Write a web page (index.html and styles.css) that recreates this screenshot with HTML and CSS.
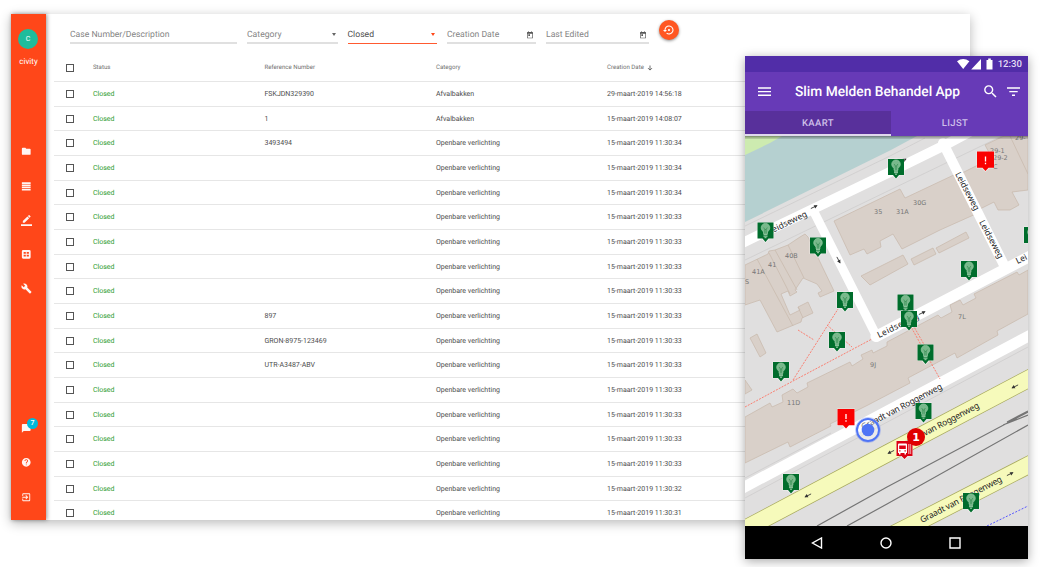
FILE: index.html
```
<!DOCTYPE html>
<html lang="en">
<head>
<meta charset="utf-8">
<title>Slim Melden</title>
<link rel="stylesheet" href="styles.css">
</head>
<body>
<main class="stage">
  <section class="desk">
    <aside class="sidebar">
      <div class="avatar">C</div>
      <div class="org">civity</div>
      <nav class="nav">
        <a class="nav-item"><svg viewBox="0 0 24 24"><path d="M10 4H4a2 2 0 0 0-2 2v12a2 2 0 0 0 2 2h16a2 2 0 0 0 2-2V8a2 2 0 0 0-2-2h-8z"/></svg></a>
        <a class="nav-item"><svg viewBox="0 0 24 24"><path d="M2 3h20v3.800H2zM2 8h20v3.800H2zM2 13h20v3.800H2zM2 18h20v3.500H2z"/></svg></a>
        <a class="nav-item"><svg class="wide" viewBox="0 0 24 24"><path d="M17.750 7 14 3.250l-10 10V17h3.750zM20.710 4.040a1 1 0 0 0 0-1.410L18.370.290a1 1 0 0 0-1.410 0L15 2.250 18.750 6zM0 20h24v4H0z"/></svg></a>
        <a class="nav-item"><svg viewBox="0 0 24 24"><path fill-rule="evenodd" d="M5 2h14a3 3 0 0 1 3 3v14a3 3 0 0 1-3 3H5a3 3 0 0 1-3-3V5a3 3 0 0 1 3-3zM6 7v4h5V7zM13 7v4h5V7zM6 13v4h5v-4zM13 13v4h5v-4z"/></svg></a>
        <a class="nav-item"><svg class="wide" viewBox="0 0 24 24"><path d="M22.700 19l-9.100-9.100c.9-2.300.4-5-1.500-6.900-2-2-5-2.400-7.400-1.300L9 6 6 9 1.600 4.700C.4 7.100.9 10.100 2.900 12.100c1.900 1.900 4.600 2.400 6.900 1.500l9.100 9.100c.4.4 1 .4 1.400 0l2.300-2.300c.5-.4.5-1.100.1-1.400z"/></svg></a>
      </nav>
      <nav class="nav nav-bottom">
        <a class="nav-item chat"><svg viewBox="0 0 24 24"><path d="M20 2H4a2 2 0 0 0-2 2v18l4-4h14a2 2 0 0 0 2-2V4a2 2 0 0 0-2-2z"/></svg><span class="badge">7</span></a>
        <a class="nav-item"><svg viewBox="0 0 24 24"><path d="M12 2C6.480 2 2 6.480 2 12s4.480 10 10 10 10-4.480 10-10S17.520 2 12 2zm1 17h-2v-2h2v2zm2.070-7.750-.9.920C13.450 12.900 13 13.500 13 15h-2v-.5c0-1.100.450-2.100 1.170-2.830l1.240-1.260c.370-.360.590-.860.590-1.410 0-1.100-.9-2-2-2s-2 .9-2 2H8c0-2.210 1.790-4 4-4s4 1.790 4 4c0 .880-.360 1.680-.930 2.250z"/></svg></a>
        <a class="nav-item"><svg viewBox="0 0 24 24"><path d="M10.090 15.590 11.500 17l5-5-5-5-1.410 1.410L12.670 11H3v2h9.670zM19 3H5a2 2 0 0 0-2 2v4h2V5h14v14H5v-4H3v4a2 2 0 0 0 2 2h14a2 2 0 0 0 2-2V5a2 2 0 0 0-2-2z"/></svg></a>
      </nav>
    </aside>
    <div class="content">
      <div class="filters">
        <div class="field f-case"><span>Case Number/Description</span></div>
        <div class="field f-cat"><span>Category</span><i class="caret"></i></div>
        <div class="field f-closed active"><span>Closed</span><i class="caret"></i></div>
        <div class="field f-created"><span>Creation Date</span><svg class="cal" viewBox="0 0 24 24"><path d="M19 3h-1V1h-2v2H8V1H6v2H5a2 2 0 0 0-2 2v15a2 2 0 0 0 2 2h14a2 2 0 0 0 2-2V5a2 2 0 0 0-2-2zm0 17H5V8h14zM7 10h5v5H7z"/></svg></div>
        <div class="field f-edited"><span>Last Edited</span><svg class="cal" viewBox="0 0 24 24"><path d="M19 3h-1V1h-2v2H8V1H6v2H5a2 2 0 0 0-2 2v15a2 2 0 0 0 2 2h14a2 2 0 0 0 2-2V5a2 2 0 0 0-2-2zm0 17H5V8h14zM7 10h5v5H7z"/></svg></div>
        <button class="reset"><svg viewBox="0 0 24 24"><path d="M14 12c0-1.100-.9-2-2-2s-2 .9-2 2 .9 2 2 2 2-.9 2-2zm-2-9a9 9 0 0 0-9 9H0l4 4 4-4H5c0-3.870 3.130-7 7-7s7 3.130 7 7a6.995 6.995 0 0 1-11.060 5.700l-1.420 1.440A9 9 0 1 0 12 3z"/></svg></button>
      </div>
      <div class="table" id="table">
        <div class="row head"><i class="box"></i><span>Status</span><span>Reference Number</span><span>Category</span><span class="sorted">Creation Date <svg viewBox="0 0 12 12"><path d="M6 1v9M2 6.200l4 4 4-4"/></svg></span></div>
      </div>
    </div>
  </section>

  <section class="phone">
    <div class="statusbar">
      <svg class="signals" viewBox="0 0 38 12"><path d="M0 3.200Q6.200-1.400 12.400 3.200L6.200 11zM24 1v10.500H14.200zM29.500 2h1.700V.5h2.600V2h1.700v9.500h-6z"/></svg>
      <span>12:30</span>
    </div>
    <div class="appbar">
      <svg class="menu" viewBox="0 0 13 9"><path d="M0 1h13M0 4.600h13M0 8.200h13"/></svg>
      <h1>Slim Melden Behandel App</h1>
      <svg class="search" viewBox="0 0 24 24"><path d="M15.500 14h-.790l-.280-.270A6.470 6.470 0 0 0 16 9.500 6.500 6.500 0 1 0 9.500 16c1.610 0 3.090-.590 4.230-1.570l.270.280v.790l5 4.990L20.490 19zm-6 0C7.010 14 5 11.990 5 9.500S7.010 5 9.500 5 14 7.010 14 9.500 11.990 14 9.500 14z"/></svg>
      <svg class="funnel" viewBox="0 0 13 9"><path d="M0 1h13M2.300 4.600h8.400M5 8.200h3"/></svg>
    </div>
    <div class="tabs"><div class="tab on">KAART</div><div class="tab">LIJST</div></div>
    <svg class="map" viewBox="745 136 283 390">
      <defs>
        <g id="pin">
          <path class="halo" d="M-8.500-.5h17v17H4L0 20.500-4 16.500h-4.500z"/>
          <path fill="#006d2c" d="M-8 0H8v16H3L0 19.500-3 16h-5z"/>
          <path fill="#78b98b" stroke="#a5d3b0" stroke-width=".6" d="M-2 11.300V9.500C-3.200 8-4.300 7.200-4.300 5.200a4.300 4.300 0 0 1 8.600 0C4.300 7.200 3.200 8 2 9.500v1.800z"/>
          <path fill="none" stroke="#a5d3b0" stroke-width="1" d="M-2 12.200h4M-2 13.700h4M-1 15.200h2"/>
          <path fill="none" stroke="#2d874b" stroke-width=".6" d="M-1.800 5 -.7 7V11M1.800 5 .7 7V11M-.7 7h1.400"/>
        </g>
        <g id="alert">
          <path class="halo" d="M-9-.5H9v17.500H4L0 20.500-4 17h-5z"/>
          <path fill="#fa0000" d="M-8.500 0h17v16.300H3L0 19.500l-3-3.200h-5.500z"/>
          <path stroke="#fff" stroke-width="1.300" d="M0 5v5M0 11.300v1.400"/>
        </g>
        <g id="arrow"><path fill="none" stroke="#333" stroke-width=".8" d="M-3.500 0H3"/><path fill="#333" d="M.5-1.800 4 0 .5 1.800z"/></g>
      </defs>
      <path fill="#e0dfdf" d="M745 136h283v390H745z"/>
      <path fill="#b5d0d0" d="M745 136h172l-27 14.500L745 222z"/>
      <path fill="#cdebb0" d="M745 136h37l-12 7-25 12z"/>
      <g class="thin">
        <path d="M745 260 770 248 890 190 1002 136M745 226 890 156 925 138M745 498 1028 347M745 478 831 433"/>
      </g>
      <g class="building">
        <path d="M834 221 900 189 905 198 958 173 978 213 940 230 902 249 893 234 880 241 881 247 867 254 864 249 850 255z"/>
        <path d="M960 174 992 158 985 145 1004 136H1028V190L1012 192 1019 205 1010 210 998 210 994 202 980 209z"/>
        <path d="M1010 136 1028 174" />
        <path d="M911 259 933 248 936 254 914 265zM936 248 966 232 969 238 939 253zM861 276 903 255 908 264 870 285z"/>
        <path d="M745 265 768 254 769 251 775 250 788 245 800 237 805 234 808 237 834 291 820 297 818 293 822 291 817 284 803 278 795 290 797 292 790 296 788 291 781 294 790 315 800 310 798 307 808 302 813 313 802 318 801 322 777 332 760 300 745 305z"/>
        <path d="M757 259 793 326M769 253 790 294M775 250 797 290M788 245 804 278M798 307 803 318"/>
        <path d="M750 338 757 334 766 353 760 357zM745 380 752 390 745 394z"/>
        <path d="M745 417 770 403 772 407 783 402 782 395 793 389 797 393 808 387 807 383 850 362 852 366 863 359 861 355 872 350 873 353 887 346 887 342 938 315 941 318 952 312 950 305 960 300 963 305 976 298 974 294 1017 272 1019 275 1028 270V314L997 331 998 335 957 358 955 353 908 378 910 383 868 405 830 424 831 426 790 447 788 442 745 463z"/>
      </g>
      <g class="road">
        <path stroke-width="10" d="M735 246.500 890 172 945 145 975 129M943 143 1004 265"/>
        <path stroke-width="9" d="M813 210 877 337"/>
        <path stroke-width="11" d="M876 336.500 1040 251"/>
        <path stroke-width="11" d="M735 492 1040 330"/>
      </g>
      <g class="foot">
        <path d="M745 407 793 381 872 339M793 380 838 309M798 330 814 340M827 325 852 347M910 325 940 379M913 325 926 348"/>
      </g>
      <g fill="none">
        <path stroke="#a9ab60" stroke-width="18" d="M725 539.500 890 452 1048 368.500M880 541 910 526 1048 455"/>
        <path stroke="#f6fabb" stroke-width="16.500" d="M725 539.500 890 452 1048 368.500M880 541 910 526 1048 455"/>
        <path stroke="#757575" stroke-width="1.200" d="M817 526 887 487 1028 412M847 526 887 504 1028 425M1003 425 1028 415M1007 422 1028 411"/>
        <path stroke="#5555ff" stroke-width="1" stroke-dasharray="2 1.500" d="M987 526 1028 506"/>
      </g>
      <g class="street">
        <text transform="translate(769.500 234.500) rotate(-26)" textLength="42.500">Leidseweg</text>
        <text transform="translate(955 174) rotate(62)" textLength="42">Leidseweg</text>
        <text transform="translate(979 222) rotate(62)" textLength="42">Leidseweg</text>
        <text transform="translate(1017.500 264) rotate(-26)">Lei</text>
        <text transform="translate(879 338) rotate(-26)" textLength="45">Leidseweg</text>
        <text transform="translate(863 430) rotate(-27.500)" textLength="90">Graadt van Roggenweg</text>
        <text transform="translate(900 449) rotate(-27.500)" textLength="90">Graadt van Roggenweg</text>
        <text transform="translate(922 523) rotate(-27.500)" textLength="91">Graadt van Roggenweg</text>
      </g>
      <g class="house">
        <text x="874" y="214">35</text><text x="896" y="214">31A</text><text x="913" y="205">30G</text>
        <text x="785" y="258">40B</text><text x="768" y="267">41</text><text x="752" y="274">41A</text><text x="745" y="284">S</text>
        <text x="958" y="319">7L</text><text x="870" y="367">9J</text><text x="787" y="405">11D</text>
        <text x="990" y="153">29-1</text><text x="993" y="160">29-2</text><text x="993" y="169">C</text><text x="1015" y="140">29-</text>
      </g>
      <use href="#arrow" transform="translate(814 207) rotate(-26)"/>
      <use href="#arrow" transform="translate(903 160.500) rotate(-26)"/>
      <use href="#arrow" transform="translate(838.500 260) rotate(62)"/>
      <use href="#arrow" transform="translate(922 313) rotate(-26)"/>
      <use href="#arrow" transform="translate(1015 386.500) rotate(153)"/>
      <use href="#arrow" transform="translate(808 495.500) rotate(153)"/>
      <use href="#arrow" transform="translate(891 452) rotate(153)"/>
      <use href="#arrow" transform="translate(1010 474) rotate(-27)"/>
      <use href="#pin" x="896" y="159"/><use href="#pin" x="765.500" y="222.500"/><use href="#pin" x="818" y="237.500"/>
      <use href="#pin" x="1032" y="227"/><use href="#pin" x="969" y="261"/><use href="#pin" x="845" y="292"/>
      <use href="#pin" x="905.500" y="294.500"/><use href="#pin" x="909" y="311"/><use href="#pin" x="837" y="332"/>
      <use href="#pin" x="925.500" y="344.500"/><use href="#pin" x="781" y="362"/><use href="#pin" x="923.500" y="403"/>
      <use href="#pin" x="791" y="474"/><use href="#pin" x="971" y="493"/>
      <use href="#alert" x="985.500" y="151.500"/><use href="#alert" x="846" y="409"/>
      <circle cx="868" cy="430" r="11" fill="#fff" fill-opacity=".35" stroke="#4f74f5" stroke-width="2"/>
      <circle cx="868" cy="430" r="12.500" fill="none" stroke="#4f74f5" stroke-opacity=".35"/>
      <circle cx="868" cy="430" r="6.300" fill="#4f74f5"/>
      <g transform="translate(904.500 441)">
        <path class="halo" d="M-8.500-.5h17v16H4L0 19l-4-3.500h-4.500z"/>
        <path fill="#dc0012" d="M-8 0H8v15H3L0 18l-3-3h-5z"/>
        <path fill="#fff" fill-rule="evenodd" d="M-6.500 3.500q0-1 1-1h7q1 0 1 1V12H1.500v1.500H0V12h-4v1.500h-1.500V12h-1zM-5.300 4.500v3.500h6.600V4.500zM-5.300 9.300v1.300h1.300V9.300zM0 9.300v1.300h1.300V9.300zM4 3h.8v10H4zM6 3h.6v10H6z"/>
      </g>
      <circle cx="916" cy="437" r="9" fill="#e00000"/>
      <text class="count" x="916" y="441">1</text>
      <path class="tabshade" d="M745 136h283v1.500H745z"/>
      <path class="tabshade soft" d="M745 137.500h283v1.500H745z"/>
    </svg>
    <div class="softkeys">
      <svg viewBox="0 0 12 12"><path d="M10.500 1v10L1.500 6z"/></svg>
      <svg viewBox="0 0 12 12"><circle cx="6" cy="6" r="5"/></svg>
      <svg viewBox="0 0 12 12"><path d="M1 1h10v10H1z"/></svg>
    </div>
  </section>
</main>
<script src="table.js"></script>
</body>
</html>
```
FILE: table.js
```
const A = 'Afvalbakken', O = 'Openbare verlichting';
const rows = [
  ['FSKJDN329390', A, '29-maart-2019 14:56:18'],
  ['1', A, '15-maart-2019 14:08:07'],
  ['3493494', O, '15-maart-2019 11:30:34'],
  ['', O, '15-maart-2019 11:30:34'],
  ['', O, '15-maart-2019 11:30:34'],
  ['', O, '15-maart-2019 11:30:33'],
  ['', O, '15-maart-2019 11:30:33'],
  ['', O, '15-maart-2019 11:30:33'],
  ['', O, '15-maart-2019 11:30:33'],
  ['897', O, '15-maart-2019 11:30:33'],
  ['GRON-8975-123469', O, '15-maart-2019 11:30:33'],
  ['UTR-A3487-ABV', O, '15-maart-2019 11:30:33'],
  ['', O, '15-maart-2019 11:30:33'],
  ['', O, '15-maart-2019 11:30:33'],
  ['', O, '15-maart-2019 11:30:33'],
  ['', O, '15-maart-2019 11:30:33'],
  ['', O, '15-maart-2019 11:30:32'],
  ['', O, '15-maart-2019 11:30:31']
];
document.getElementById('table').insertAdjacentHTML('beforeend', rows.map(r =>
  `<div class="row"><i class="box"></i><span class="closed">Closed</span><span>${r[0]}</span><span>${r[1]}</span><span>${r[2]}</span></div>`
).join(''));
```
FILE: styles.css
```
* { box-sizing: border-box; }
body {
  margin: 0;
  width: 1043px;
  height: 567px;
  overflow: hidden;
  background: #fff;
  font-family: Roboto, "Liberation Sans", sans-serif;
  text-rendering: geometricPrecision;
}
svg { display: block; flex: none; }
.stage { position: relative; height: 567px; padding: 14px 0 0 11px; }

.desk {
  display: flex;
  width: 959px;
  height: 506px;
  background: #fff;
  box-shadow: 0 3px 11px rgba(0, 0, 0, .28);
}
.sidebar {
  display: flex;
  flex-direction: column;
  align-items: center;
  width: 35px;
  padding: 14.500px 0 6px;
  background: #ff4719;
  color: #fff;
  box-shadow: 1px 0 4px rgba(0, 0, 0, .4);
}
.avatar {
  width: 20px;
  height: 20px;
  margin-right: 1px;
  border-radius: 50%;
  background: #1fbc9c;
  font-size: 7px;
  line-height: 20px;
  text-align: center;
}
.org { margin-top: 7.500px; font-size: 8px; line-height: 11px; }
.nav { width: 31px; margin: 67.500px 4px 0 0; }
.nav-bottom { margin-top: auto; }
.nav-item {
  display: flex;
  align-items: center;
  justify-content: center;
  position: relative;
  height: 34.300px;
}
.nav-item svg { width: 10.500px; height: 10.500px; fill: #fff; fill-opacity: .95; }
.nav-item svg.wide { width: 11px; height: 11px; }
.badge {
  position: absolute;
  left: 16px;
  top: 7px;
  width: 11px;
  height: 11px;
  border-radius: 50%;
  background: #00b9da;
  font-size: 7px;
  font-weight: 500;
  line-height: 11px;
  text-align: center;
}

.content { flex: 1; min-width: 0; overflow: hidden; padding-left: 8px; }
.filters { display: flex; gap: 10px; height: 40px; padding: 6px 0 0 16px; }
.field {
  display: flex;
  align-items: center;
  justify-content: space-between;
  height: 24px;
  padding-top: 7px;
  border-bottom: 2px solid #e0e0e0;
  color: #858585;
  font-size: 8.650px;
  line-height: 12px;
  white-space: nowrap;
}
.f-case { width: 167px; }
.f-cat { width: 90.500px; }
.f-closed { width: 89.500px; }
.f-created { width: 89px; }
.f-edited { width: 103px; }
.field.active { height: 23.500px; color: #505050; border-bottom: 1px solid #ff5a30; }
.caret {
  margin-right: 2px;
  border: 2.500px solid transparent;
  border-top: 3px solid #666;
  border-bottom: 0;
}
.active .caret { border-top-color: #ff4719; }
.cal { width: 8px; height: 8px; margin-right: 2px; fill: #555; }
.reset {
  display: flex;
  align-items: center;
  justify-content: center;
  width: 20px;
  height: 20px;
  padding: 0;
  border: 0;
  border-radius: 50%;
  background: #ff5722;
  box-shadow: 0 1px 3px rgba(0, 0, 0, .45);
}
.reset svg { width: 12px; height: 12px; fill: #fff; }

.row {
  display: grid;
  grid-template-columns: 39px 171.500px 171.500px 171px 1fr;
  align-items: center;
  height: 24.680px;
  border-bottom: 1px solid #e6e6e6;
  color: #4c4c4c;
  font-size: 7px;
  line-height: 10px;
  white-space: nowrap;
}
.row.head { height: 28px; color: #707070; font-size: 6.100px; }
.box { width: 8px; height: 8px; margin-left: 12px; border: 1px solid #555; }
.closed { color: #2f9c30; }
.sorted { display: flex; align-items: center; gap: 3px; }
.sorted svg { width: 6px; height: 6px; fill: none; stroke: #555; stroke-width: 1.700; }

.phone {
  position: absolute;
  left: 745px;
  top: 56px;
  display: flex;
  flex-direction: column;
  width: 283px;
  height: 503px;
  box-shadow: 0 2px 10px rgba(0, 0, 0, .35);
  color: #fff;
}
.statusbar {
  display: flex;
  align-items: center;
  justify-content: flex-end;
  gap: 3px;
  height: 16px;
  padding-right: 6px;
  background: #512da8;
  color: #e4dcf4;
  font-size: 9.600px;
  font-weight: 500;
}
.signals { width: 38px; height: 12px; fill: #fff; }
.appbar {
  display: flex;
  align-items: center;
  height: 39px;
  padding: 0 8px 0 13px;
  background: #673ab7;
}
.appbar h1 {
  flex: 1;
  margin: 1px 0 0 24px;
  font-size: 13.750px;
  font-weight: 500;
  line-height: 20px;
  white-space: nowrap;
}
.menu, .funnel { width: 13px; height: 9px; stroke: #fff; stroke-width: 1.400; }
.search { width: 17px; height: 17px; margin-right: 8px; fill: #fff; }
.tabs { display: flex; height: 25px; background: #673ab7; }
.tab {
  flex: 1;
  padding: 1px 9px 0 0;
  color: #cfc0ea;
  font-size: 9.500px;
  font-weight: 500;
  line-height: 23px;
  letter-spacing: .4px;
  text-align: center;
}
.tab.on { flex: 0 0 146px; padding-right: 0; background: #58309b; border-bottom: 2px solid #e0d8ee; }
.map { width: 283px; height: 390px; }
.halo { fill: #fff; fill-opacity: .5; }
.thin { fill: none; stroke: #cbcaca; stroke-width: .7; }
.building { fill: #d9d0c9; stroke: #c7b8ab; stroke-width: .7; }
.road { fill: none; stroke: #fff; stroke-linejoin: round; stroke-linecap: round; }
.foot { fill: none; stroke: #fa8072; stroke-width: 1; stroke-dasharray: 2 1.200; }
.street { font-family: "Noto Sans", sans-serif; font-size: 8.500px; fill: #222; }
.house { font-family: "DejaVu Sans", sans-serif; font-size: 6.500px; fill: #777; }
.count { font-family: "DejaVu Sans", sans-serif; font-size: 11px; font-weight: 700; fill: #fff; text-anchor: middle; }
.tabshade { fill: #000; fill-opacity: .35; }
.tabshade.soft { fill-opacity: .14; }
.softkeys {
  display: flex;
  align-items: center;
  justify-content: center;
  gap: 57.300px;
  height: 33px;
  padding-right: 1px;
  background: #000;
}
.softkeys svg { width: 12px; height: 12px; fill: none; stroke: #fff; stroke-width: 1.400; }
```
